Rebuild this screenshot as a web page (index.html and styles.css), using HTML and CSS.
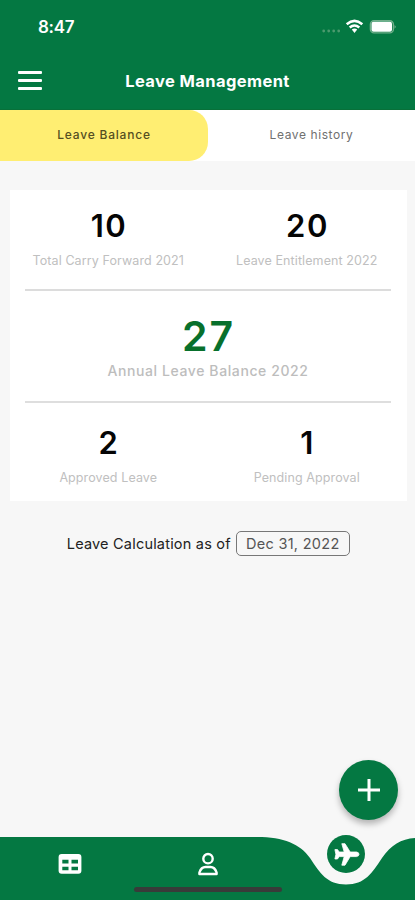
FILE: index.html
```html
<!DOCTYPE html>
<html lang="en">
<head>
<meta charset="utf-8">
<meta name="viewport" content="width=device-width, initial-scale=1">
<title>Leave Management</title>
<link rel="stylesheet" href="styles.css">
</head>
<body>
<div class="app">
  <header class="header">
    <div class="status">
      <span class="time">8:47</span>
      <svg class="status-icons" width="76" height="18" viewBox="0 0 76 18">
        <g fill="#4c9a6e"><circle cx="3.7" cy="14" r="1.4"/><circle cx="8.7" cy="14" r="1.4"/><circle cx="13.7" cy="14" r="1.4"/><circle cx="18.7" cy="14" r="1.4"/></g>
        <g fill="none" stroke="#fff" stroke-width="2.6"><path d="M26.7 7.2Q34.5 .5 42.3 7.2"/><path d="M29.7 10.5Q34.5 6.5 39.3 10.5"/></g>
        <path fill="#fff" d="M31.8 12.6Q34.5 10.5 37.2 12.6L34.5 16Z"/>
        <rect x="50.4" y="3.7" width="23" height="12.2" rx="3.6" fill="none" stroke="#71af8b" stroke-width="1.4"/>
        <rect x="51.5" y="4.8" width="20.5" height="10" rx="2" fill="#fff"/>
        <path d="M74.5 7.9Q77 9.8 74.5 11.7Z" fill="#71af8b"/>
      </svg>
    </div>
    <div class="toolbar">
      <div class="menu"><i></i><i></i><i></i></div>
      <h1 class="title">Leave Management</h1>
    </div>
  </header>
  <nav class="tabs">
    <div class="tab active"><span>Leave Balance</span></div>
    <div class="tab"><span>Leave history</span></div>
  </nav>
  <main class="main">
    <section class="card">
      <div class="row top">
        <div class="stat"><b>10</b><span>Total Carry Forward 2021</span></div>
        <div class="stat"><b>20</b><span>Leave Entitlement 2022</span></div>
      </div>
      <div class="total"><b>27</b><span>Annual Leave Balance 2022</span></div>
      <div class="row bottom">
        <div class="stat"><b>2</b><span>Approved Leave</span></div>
        <div class="stat"><b>1</b><span>Pending Approval</span></div>
      </div>
    </section>
    <div class="asof"><span class="asof-label">Leave Calculation as of</span><span class="date">Dec 31, 2022</span></div>
  </main>
  <button class="fab" aria-label="Add"><svg width="24" height="24" viewBox="0 0 24 24"><path d="M12 1V23M1 12H23" stroke="#fff" stroke-width="3" fill="none"/></svg></button>
  <footer class="bottom-bar">
    <svg class="bar-shape" width="415" height="70" viewBox="0 0 415 70">
      <path fill="#047842" d="M0 7H257C284 7 300 14 310 28C320 43 327 54.5 346 54.5C365 54.5 372 43 382 28C391 15 401 9 415 8V70H0Z"/>
    </svg>
    <div class="nav-items">
      <div class="nav-item"><svg width="24" height="22" viewBox="0 0 24 22"><rect x=".6" y="2" width="22.8" height="19.8" rx="3" fill="#fff"/><path fill="#047842" d="M4.3 7.8h6.2v3.7H4.3zM13.5 7.8h6.5v3.7h-6.5zM4.3 14.7h6.2v3.5H4.3zM13.5 14.7h6.5v3.5h-6.5z"/></svg></div>
      <div class="nav-item"><svg width="22" height="24" viewBox="0 0 22 24"><g fill="none" stroke="#fff" stroke-width="2.4"><circle cx="11" cy="6.7" r="4.7"/><path stroke-linejoin="round" d="M2.4 22V20.5Q4.2 15 8.5 15H13.5Q17.8 15 19.6 20.5V22Z"/></g></svg></div>
      <div class="nav-item current"><svg width="38" height="38" viewBox="0 0 38 38"><circle cx="19" cy="19" r="19" fill="#047842"/><path fill="#fff" stroke="#fff" stroke-width=".8" stroke-linejoin="round" d="M29.5 17H23.2L18 8.7H14.8L17.2 17H12.2L10.5 14.6H7.9L8.9 19.3L7.9 24H10.5L12.2 21.6H17.2L14.8 30.2H18L23.2 21.6H29.5Q32 21.2 32 19.3Q32 17.4 29.5 17Z"/></svg></div>
    </div>
    <div class="home"></div>
  </footer>
</div>
</body>
</html>
```
FILE: styles.css
```css
* { box-sizing: border-box; }
body { margin: 0; font-family: Inter, "Liberation Sans", sans-serif; background: #f7f7f7; }
svg { display: block; }
.app { position: relative; width: 415px; height: 900px; overflow: hidden; display: flex; flex-direction: column; background: #f7f7f7; }
.header { height: 110px; background: #047842; color: #fff; border-bottom: 1px solid #087039; }
.status { display: flex; justify-content: space-between; padding: 17px 19px 0 38px; height: 60px; }
.time { font-size: 17px; line-height: 20px; font-weight: 600; letter-spacing: -0.3px; }
.toolbar { display: grid; grid-template-columns: 50px 1fr 50px; align-items: center; height: 41px; }
.menu { display: grid; gap: 5px; width: 24px; margin-left: 18px; }
.menu i { height: 3px; background: #fff; border-radius: 1px; }
.title { margin: 0; text-align: center; font-size: 16.5px; line-height: 20px; font-weight: 700; letter-spacing: 0.4px; white-space: nowrap; }
.tabs { display: grid; grid-template-columns: 208px 207px; height: 51px; background: #fff; }
.tab { display: grid; place-items: center; padding-bottom: 2px; font-size: 12px; letter-spacing: 0.6px; color: #707070; }
.tab.active { background: #ffee72; color: #554f22; border-radius: 0 19px 19px 0; font-weight: 500; letter-spacing: 0.8px; }
.main { flex: 1; padding: 29px 8px 0 9.5px; }
.card { height: 311px; padding: 0 16px 0 15.5px; background: #fff; }
.row { display: grid; grid-template-columns: 1fr 1fr; margin: 0 -15px 0 -16px; }
.stat, .total { display: flex; flex-direction: column; align-items: center; white-space: nowrap; }
.top { padding-top: 16px; height: 99px; }
.stat b { font-size: 31px; line-height: 40px; font-weight: 600; color: #050505; letter-spacing: 1.6px; margin-right: -1.6px; }
.stat span { margin-top: 5px; font-size: 12.5px; line-height: 20px; color: #c0c0c0; letter-spacing: 0.1px; }
.total { height: 114px; border-top: 2px solid #dcdcdc; border-bottom: 2px solid #dedede; padding-top: 20px; }
.total b { font-size: 41px; line-height: 50px; font-weight: 600; color: #08702c; letter-spacing: 2px; margin-right: -1px; }
.total span { font-size: 14px; line-height: 20px; font-weight: 500; color: #bdbdbd; letter-spacing: 0.6px; }
.bottom { padding-top: 19.5px; }
.asof { display: flex; justify-content: center; align-items: center; gap: 5px; margin-top: 30px; font-size: 14.5px; color: #222; white-space: nowrap; }
.asof-label { letter-spacing: 0.2px; }
.date { width: 114px; height: 25px; border: 1px solid #777; border-radius: 5px; line-height: 23px; text-align: center; color: #555; letter-spacing: 0.3px; }
.fab { position: absolute; left: 339px; top: 760px; width: 59px; height: 60px; padding: 0; border: 0; border-radius: 50%; display: grid; place-items: center; background: #047842; box-shadow: 0 4px 6px rgba(0,0,0,.28); }
.bottom-bar { position: relative; height: 70px; }
.bar-shape { position: absolute; inset: 0; }
.nav-items { position: relative; display: grid; grid-template-columns: 139px 137px 139px; height: 70px; }
.nav-item { display: flex; justify-content: center; align-items: flex-start; padding-top: 22px; }
.nav-item.current { padding-top: 5px; }
.home { position: absolute; left: 134px; bottom: 8px; width: 148px; height: 5px; border-radius: 3px; background: #383b39; }
```
